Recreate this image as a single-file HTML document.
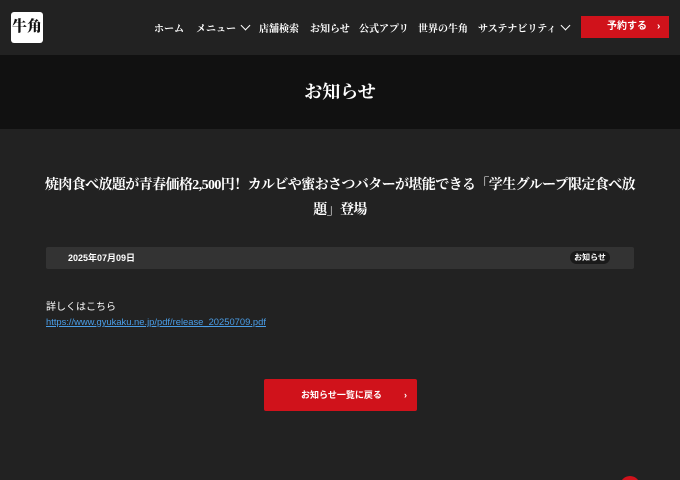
<!DOCTYPE html>
<html style="width:680px;height:480px;overflow:hidden"><head><meta charset="utf-8"><style>
*{margin:0;padding:0;box-sizing:border-box}
body{width:680px;height:480px;overflow:hidden;background:#222;color:#fff;font-family:"Liberation Sans","Noto Sans CJK JP",sans-serif;position:relative}
.serif{font-family:"Liberation Serif","Noto Serif CJK SC",serif;font-weight:bold}
header{height:55px;background:#222;position:relative}
.logo{position:absolute;left:11px;top:12px;width:32px;height:31px;background:#fff;border-radius:3px;color:#111;font-size:15px;line-height:31px;text-align:center;font-weight:900}
nav{position:absolute;top:20px;font-size:10px;white-space:nowrap}
nav span{position:absolute}
.chev{display:inline-block;width:7px;height:7px;border-right:1.5px solid #fff;border-bottom:1.5px solid #fff;transform:rotate(45deg);margin-left:6px;position:relative;top:-3px}
.btn{position:absolute;left:581px;top:16px;width:88px;height:22px;background:#d0121b;font-size:10px;font-weight:bold;line-height:22px}
.hero{height:74px;background:#111;text-align:center;font-size:18px;line-height:74px}
h1{position:absolute;left:26px;width:628px;top:173px;text-align:center;font-size:14px;line-height:25px;white-space:nowrap;letter-spacing:-0.6px}
.bar{position:absolute;left:46px;top:247px;width:588px;height:22px;background:#333;border-radius:2px;font-size:9px;font-weight:bold;line-height:22px}
.tag{position:absolute;left:524px;top:4px;width:40px;height:13px;line-height:13px;background:#1a1a1a;border-radius:7px;font-size:8px;text-align:center}
.txt{position:absolute;left:46px;top:301px;font-size:10px;line-height:14px}
.txt a{color:#4a9ee8;text-decoration:underline;font-size:9.4px}
.back{position:absolute;left:264px;top:379px;width:153px;height:32px;background:#d0121b;border-radius:2px;font-size:9px;font-weight:bold;line-height:32px}
</style></head><body>
<header>
<div class="logo serif">牛角</div>
<nav class="serif">
<span style="left:154px">ホーム</span>
<span style="left:196px">メニュー<i class="chev"></i></span>
<span style="left:259px">店舗検索</span>
<span style="left:310px">お知らせ</span>
<span style="left:359px">公式アプリ</span>
<span style="left:418px">世界の牛角</span>
<span style="left:478px">サステナビリティ<i class="chev"></i></span>
</nav>
<div class="btn"><span style="position:absolute;left:26px">予約する</span><span style="position:absolute;left:76px">›</span></div>
</header>
<div class="hero serif">お知らせ</div>
<h1 class="serif">焼肉食べ放題が青春価格2,500円！カルビや蜜おさつバターが堪能できる「学生グループ限定食べ放<br>題」登場</h1>
<div class="bar"><span style="position:absolute;left:22px">2025年07月09日</span><div class="tag">お知らせ</div></div>
<div class="txt">詳しくはこちら<br><a>https://www.gyukaku.ne.jp/pdf/release_20250709.pdf</a></div>
<div class="back"><span style="position:absolute;left:37px">お知らせ一覧に戻る</span><span style="position:absolute;left:140px">›</span></div>
<div style="position:absolute;left:620px;top:476px;width:20px;height:20px;border-radius:50%;background:#d0121b"></div>
</body></html>
